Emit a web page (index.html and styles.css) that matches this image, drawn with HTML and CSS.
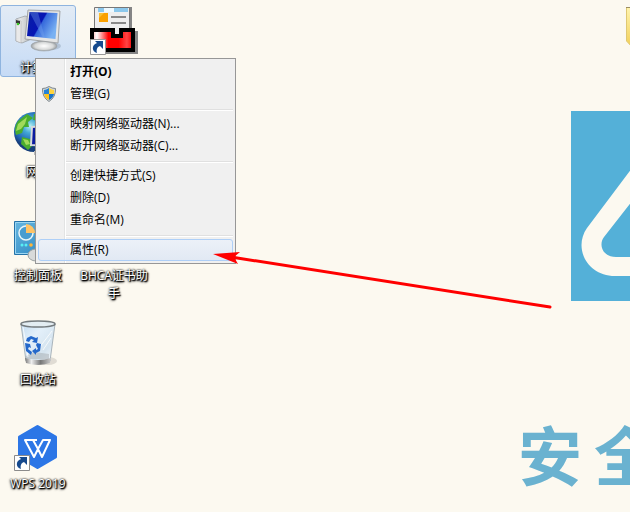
FILE: index.html
```html
<!DOCTYPE html>
<html lang="zh-CN">
<head>
<meta charset="utf-8">
<title>桌面</title>
<link rel="stylesheet" href="styles.css">
</head>
<body>
<main class="desktop">
  <svg class="emblem" width="190" height="190" viewBox="0 0 190 190" aria-hidden="true">
    <path fill="#54b0d8" d="M0 0H190V190H0Z"/>
    <path fill="#fcf9f0" fill-rule="evenodd" d="M95 12L16 117C2 137 16 165 44 165H146C174 165 188 137 174 117ZM95 47L33 126C27 134 32 146 45 146H145C158 146 163 134 157 126Z"/>
  </svg>
  <div class="motto"><span>安</span><span>全</span></div>
  <svg class="folder" width="48" height="48" viewBox="0 0 48 48" aria-hidden="true">
    <defs><linearGradient id="fold" x2="0" y2="1"><stop stop-color="#fff4ae"/><stop offset="1" stop-color="#f2cf57"/></linearGradient></defs>
    <path fill="url(#fold)" stroke="#dfc873" d="M.5.5H14L18 4H44V40H6L.5 34Z"/>
    <path fill="none" stroke="#9c8d61" d="M0 .5H6"/>
  </svg>

  <nav class="icons">
    <a href="#computer" class="tile selected">
      <svg width="48" height="48" viewBox="0 0 48 48" aria-hidden="true">
        <defs>
          <linearGradient id="scr" x2="1" y2=".5"><stop stop-color="#0820a4"/><stop offset=".52" stop-color="#0714b4"/><stop offset=".56" stop-color="#3568db"/><stop offset="1" stop-color="#79b1f2"/></linearGradient>
          <linearGradient id="met" x2="1"><stop stop-color="#f4f5f5"/><stop offset=".6" stop-color="#c9cccd"/><stop offset="1" stop-color="#777b7e"/></linearGradient>
          <radialGradient id="base"><stop stop-color="#fff"/><stop offset=".7" stop-color="#d8dada"/><stop offset="1" stop-color="#999ea2"/></radialGradient>
        </defs>
        <ellipse cx="37" cy="39" rx="10" ry="4" fill="#8597aa" opacity=".4"/>
        <path d="M2 12L11 9L20 11V31L8 36L2 34Z" fill="url(#met)" stroke="#93999d" stroke-width=".7"/>
        <path d="M2 12L7 14V36L2 34Z" fill="#e9e9e9" stroke="#aaa" stroke-width=".5"/>
        <path d="M2 13L6 14V17L2 16Z" fill="#333"/><circle cx="4" cy="17" r="1.3" fill="#37c525"/>
        <path d="M25 32L33 33L35 38L23 38Z" fill="#bfc2c4"/>
        <ellipse cx="30" cy="39" rx="13" ry="5" fill="url(#base)" stroke="#9ea3a5" stroke-width=".6"/>
        <path d="M14 3L46 4L44 36L11 32Z" fill="#e4e5e5" stroke="#a2a5a7"/>
        <path d="M15.5 5L43.5 6L41.500 32L13 29Z" fill="url(#scr)"/>
        <path d="M15.5 5L24 5.400L31 31L29 31Z" fill="#79a7ee" opacity=".35"/>
      </svg>
      <span class="label">计算机</span>
    </a>
    <a href="#inbox" class="tile">
      <svg width="48" height="48" viewBox="0 0 48 48" aria-hidden="true">
        <defs><linearGradient id="red" x2="1"><stop stop-color="#faa"/><stop offset=".12" stop-color="#fff"/><stop offset=".4" stop-color="#f00"/><stop offset=".65" stop-color="#f00"/><stop offset=".85" stop-color="#f44"/><stop offset="1" stop-color="#e00"/></linearGradient></defs>
        <path fill="#858585" d="M7 0H42V24H48V47H8V23Z"/>
        <path fill="#eee" stroke="#777" d="M4.500.500H39.500V30H4.500Z"/>
        <path fill="#8cc8ec" d="M8 1H38V5H8Z"/><path fill="#eef9ff" d="M14 1H24V5H14Z"/>
        <path fill="#faa000" d="M9 6H18V15H9Z"/><path fill="#f8bf35" d="M9 6H14L9 11Z"/>
        <path stroke="#888" stroke-width="2" d="M21 10H36M21 16H36"/>
        <path fill="url(#red)" stroke="#000" stroke-width="4" d="M2 23H23V29H31V23H43V43H2Z"/>
        <path fill="#fff" stroke="#999" d="M.500 32.500H15.500V47.500H.500Z"/>
        <path fill="#164a8e" d="M5 34H13V42L10 39C7 40 6 43 7 46C2 45 1 38 7 36Z"/>
      </svg>
    </a>
    <a href="#network" class="tile">
      <svg width="48" height="48" viewBox="0 0 48 48" aria-hidden="true">
        <defs><radialGradient id="globe" cx=".4" cy=".35"><stop stop-color="#b8f1f2"/><stop offset=".35" stop-color="#43a8d7"/><stop offset=".8" stop-color="#1f60b2"/><stop offset="1" stop-color="#17407c"/></radialGradient></defs>
        <circle cx="20" cy="21" r="20" fill="url(#globe)"/>
        <path fill="#49ad2e" d="M4 10L13 3L19 7L14 11L15 16L10 16L8 22L2 24C0 17 2 13 4 10ZM8 26L16 28L19 34L14 39L7 33ZM20 3L28 4L25 10L19 9Z"/>
        <path fill="#a1da5a" d="M4 13L13 6L11 13L7 18L2 20ZM9 28L14 29L16 33L12 34Z"/>
        <path fill="#0b1aa0" stroke="#d7dadd" stroke-width="2" d="M18 16L46 14V35L17 34Z"/>
        <path fill="#bbb" d="M20 40H38V44H20Z"/>
      </svg>
      <span class="label">网络</span>
    </a>
    <a href="#control" class="tile">
      <svg width="48" height="48" viewBox="0 0 48 48" aria-hidden="true">
        <defs><linearGradient id="cp" x2="1" y2="1"><stop stop-color="#65b6e0"/><stop offset="1" stop-color="#2681bd"/></linearGradient></defs>
        <path fill="url(#cp)" stroke="#2674a9" d="M.500 6.500H46.500V39.500H.500Z"/>
        <path fill="none" stroke="#9bd6f2" d="M1.500 7.500H45V38.500H1.500Z"/>
        <circle cx="12" cy="18" r="7" fill="#4a9dd0" stroke="#e9f5f9" stroke-width="1.500"/>
        <path fill="#ffc365" d="M12 18V9A9 9 0 0 1 21 18Z"/>
        <circle cx="8" cy="30" r="1.500" fill="#58eff4"/><circle cx="12" cy="30" r="1.500" fill="#58eff4"/><circle cx="17" cy="30" r="1.800" fill="#ffb438"/>
        <ellipse cx="22" cy="40" rx="8" ry="6" fill="#d8dada" stroke="#9ca0a1"/>
      </svg>
      <span class="label">控制面板</span>
    </a>
    <a href="#bhca" class="tile label-only"><span class="label">BHCA证书助手</span></a>
    <a href="#recycle" class="tile">
      <svg width="48" height="48" viewBox="0 0 48 48" aria-hidden="true">
        <defs><linearGradient id="bin" x2="1" y2="1"><stop stop-color="#c3dcf0"/><stop offset=".35" stop-color="#e3f0fa"/><stop offset=".7" stop-color="#d5e4ef"/><stop offset="1" stop-color="#f9fcfd"/></linearGradient><linearGradient id="foot" x2="1"><stop stop-color="#777"/><stop offset=".25" stop-color="#eee"/><stop offset=".6" stop-color="#777"/><stop offset="1" stop-color="#ccc"/></linearGradient></defs>
        <ellipse cx="34" cy="42" rx="9" ry="4" fill="#8d897e" opacity=".25"/>
        <path fill="url(#bin)" stroke="#a9b4bb" d="M7 5H41L36 42Q24 46 12 42Z"/>
        <path fill="#a5abaf" opacity=".5" d="M12 37L20 33L35 35L35 40H12Z"/>
        <path fill="url(#foot)" d="M11 39Q24 43 37 39L36 44Q24 48 12 44Z"/>
        <ellipse cx="24" cy="5" rx="17" ry="3" fill="#e3edf2" stroke="#747b7e" stroke-width="1.500"/>
        <path stroke="#fff" opacity=".8" d="M9 8L14 38M38 12L25 29M37 19L29 31"/>
        <g fill="#2468ca"><path d="M13 19L17 17L22 19L24 18L23 24L18 23L20 21L17 20L15 23L12 22Z"/><path d="M23 24L27 25L26 32L22 34L22 36L18 32L22 29V31L24 30L22 26Z"/><path d="M11 24L16 25L17 29L15 28L14 30L18 33L17 36L12 32Z"/></g>
      </svg>
      <span class="label">回收站</span>
    </a>
    <a href="#wps" class="tile">
      <svg width="48" height="48" viewBox="0 0 48 48" aria-hidden="true">
        <path fill="#2c76e6" stroke="#2c76e6" stroke-width="3" stroke-linejoin="round" d="M23.500 3.500L41.500 14V34L23.500 44.500L5.500 34V14Z"/>
        <path fill="none" stroke="#fff" stroke-width="2" stroke-linejoin="round" d="M23 17H11L20 34L24 26L28 34L36 17H29L24 26L19 17"/>
        <path fill="#fff" stroke="#8b8b8b" d="M.500 32.500H15.500V47.500H.500Z"/>
        <path fill="#164a8e" d="M5 34H13V42L10 39C7 40 6 43 7 46C2 45 1 38 7 36Z"/>
      </svg>
      <span class="label">WPS 2019</span>
    </a>
  </nav>

  <div class="menu" role="menu">
    <button class="item default" role="menuitem">打开(O)</button>
    <button class="item" role="menuitem">
      <svg class="shield" width="16" height="16" viewBox="0 0 16 16" aria-hidden="true">
        <path fill="#d5dadd" stroke="#7e878c" d="M8 .500Q11 2.500 14.500 2.500Q15 11 8 15.500Q1 11 1.500 2.500Q5 2.500 8 .500Z"/>
        <path fill="#2683d6" d="M8 2Q5 4 3 4V8H8Z"/><path fill="#ffd43c" d="M8 2Q11 4 13 4V8H8Z"/><path fill="#ffc31c" d="M3 8H8V14Q4 12 3 8Z"/><path fill="#1973c9" d="M8 8H13Q12 12 8 14Z"/>
      </svg>管理(G)</button>
    <div class="separator" role="separator"></div>
    <button class="item" role="menuitem">映射网络驱动器(N)...</button>
    <button class="item" role="menuitem">断开网络驱动器(C)...</button>
    <div class="separator" role="separator"></div>
    <button class="item" role="menuitem">创建快捷方式(S)</button>
    <button class="item" role="menuitem">删除(D)</button>
    <button class="item" role="menuitem">重命名(M)</button>
    <div class="separator" role="separator"></div>
    <button class="item active" role="menuitem">属性(R)</button>
  </div>

  <svg class="arrow" width="340" height="60" viewBox="0 0 340 60" aria-hidden="true">
    <path stroke="#f00" stroke-width="3" stroke-linecap="round" d="M18 5L337 55"/>
    <path fill="#f00" d="M0 2L27 0L21 5L25 12Z"/>
  </svg>
</main>
</body>
</html>
```
FILE: styles.css
```css
* { box-sizing: border-box; }

body {
  margin: 0;
  background: #fcf9f0;
  font: 12px/18px "Open Sans", "Noto Sans CJK SC", sans-serif;
  color: #000;
}

.desktop {
  position: relative;
  min-height: 100vh;
  overflow: hidden;
}

.icons {
  display: grid;
  grid-template-columns: 76px 76px;
  grid-auto-rows: 104px;
  padding-top: 5px;
}

.tile {
  grid-column: 1;
  display: flex;
  flex-direction: column;
  align-items: center;
  align-self: start;
  gap: 4px;
  height: 72px;
  padding-top: 2px;
  color: #fff;
  text-decoration: none;
}

.tile svg { flex: none; }

.tile:nth-child(2) {
  grid-column: 2;
  grid-row: 1;
}

.selected {
  border: 1px solid #8fb4df;
  border-radius: 3px;
  background: linear-gradient(#e2ebf5, #c6dbf6);
  padding-top: 1px;
}

.label {
  padding: 0 4px;
  text-align: center;
  text-shadow: 0 0 2px #000, 1px 1px 1px #000, 1px 1px 2px #000, 0 1px 3px #000;
}

.label-only {
  grid-column: 2;
  grid-row: 3;
  padding-top: 54px;
}

.label-only .label { padding: 0 2px; }

.menu {
  position: absolute;
  left: 35px;
  top: 58px;
  width: 201px;
  padding: 2px;
  border: 1px solid #979797;
  background: linear-gradient(90deg, #f0f0f0 28px, #e2e3e3 28px, #e2e3e3 29px, #fff 29px, #fff 30px, #f0f0f0 30px);
}

.item {
  position: relative;
  display: block;
  width: 100%;
  height: 22px;
  padding: 0 0 0 32px;
  border: 0;
  background: none;
  font: inherit;
  color: inherit;
  text-align: left;
}

.default { font-weight: 700; }

.active {
  padding-left: 31px;
  border: 1px solid #aecff7;
  border-radius: 3px;
  background: linear-gradient(rgba(235, 241, 250, .8), rgba(219, 230, 245, .7));
}

.shield {
  position: absolute;
  left: 3px;
  top: 3px;
}

.separator {
  height: 2px;
  margin: 4px 0 2px 28px;
  border-top: 1px solid #e0e0e0;
  border-bottom: 1px solid #fff;
}

.arrow {
  position: absolute;
  left: 213px;
  top: 252px;
}

.emblem {
  position: absolute;
  left: 571px;
  top: 111px;
}

.folder {
  position: absolute;
  left: 626px;
  top: 7px;
}

.motto {
  position: absolute;
  left: 518px;
  top: 420px;
  display: flex;
  gap: 12px;
  font: 700 64px/64px "Noto Sans CJK SC", sans-serif;
  color: #6ab2d0;
}
```
